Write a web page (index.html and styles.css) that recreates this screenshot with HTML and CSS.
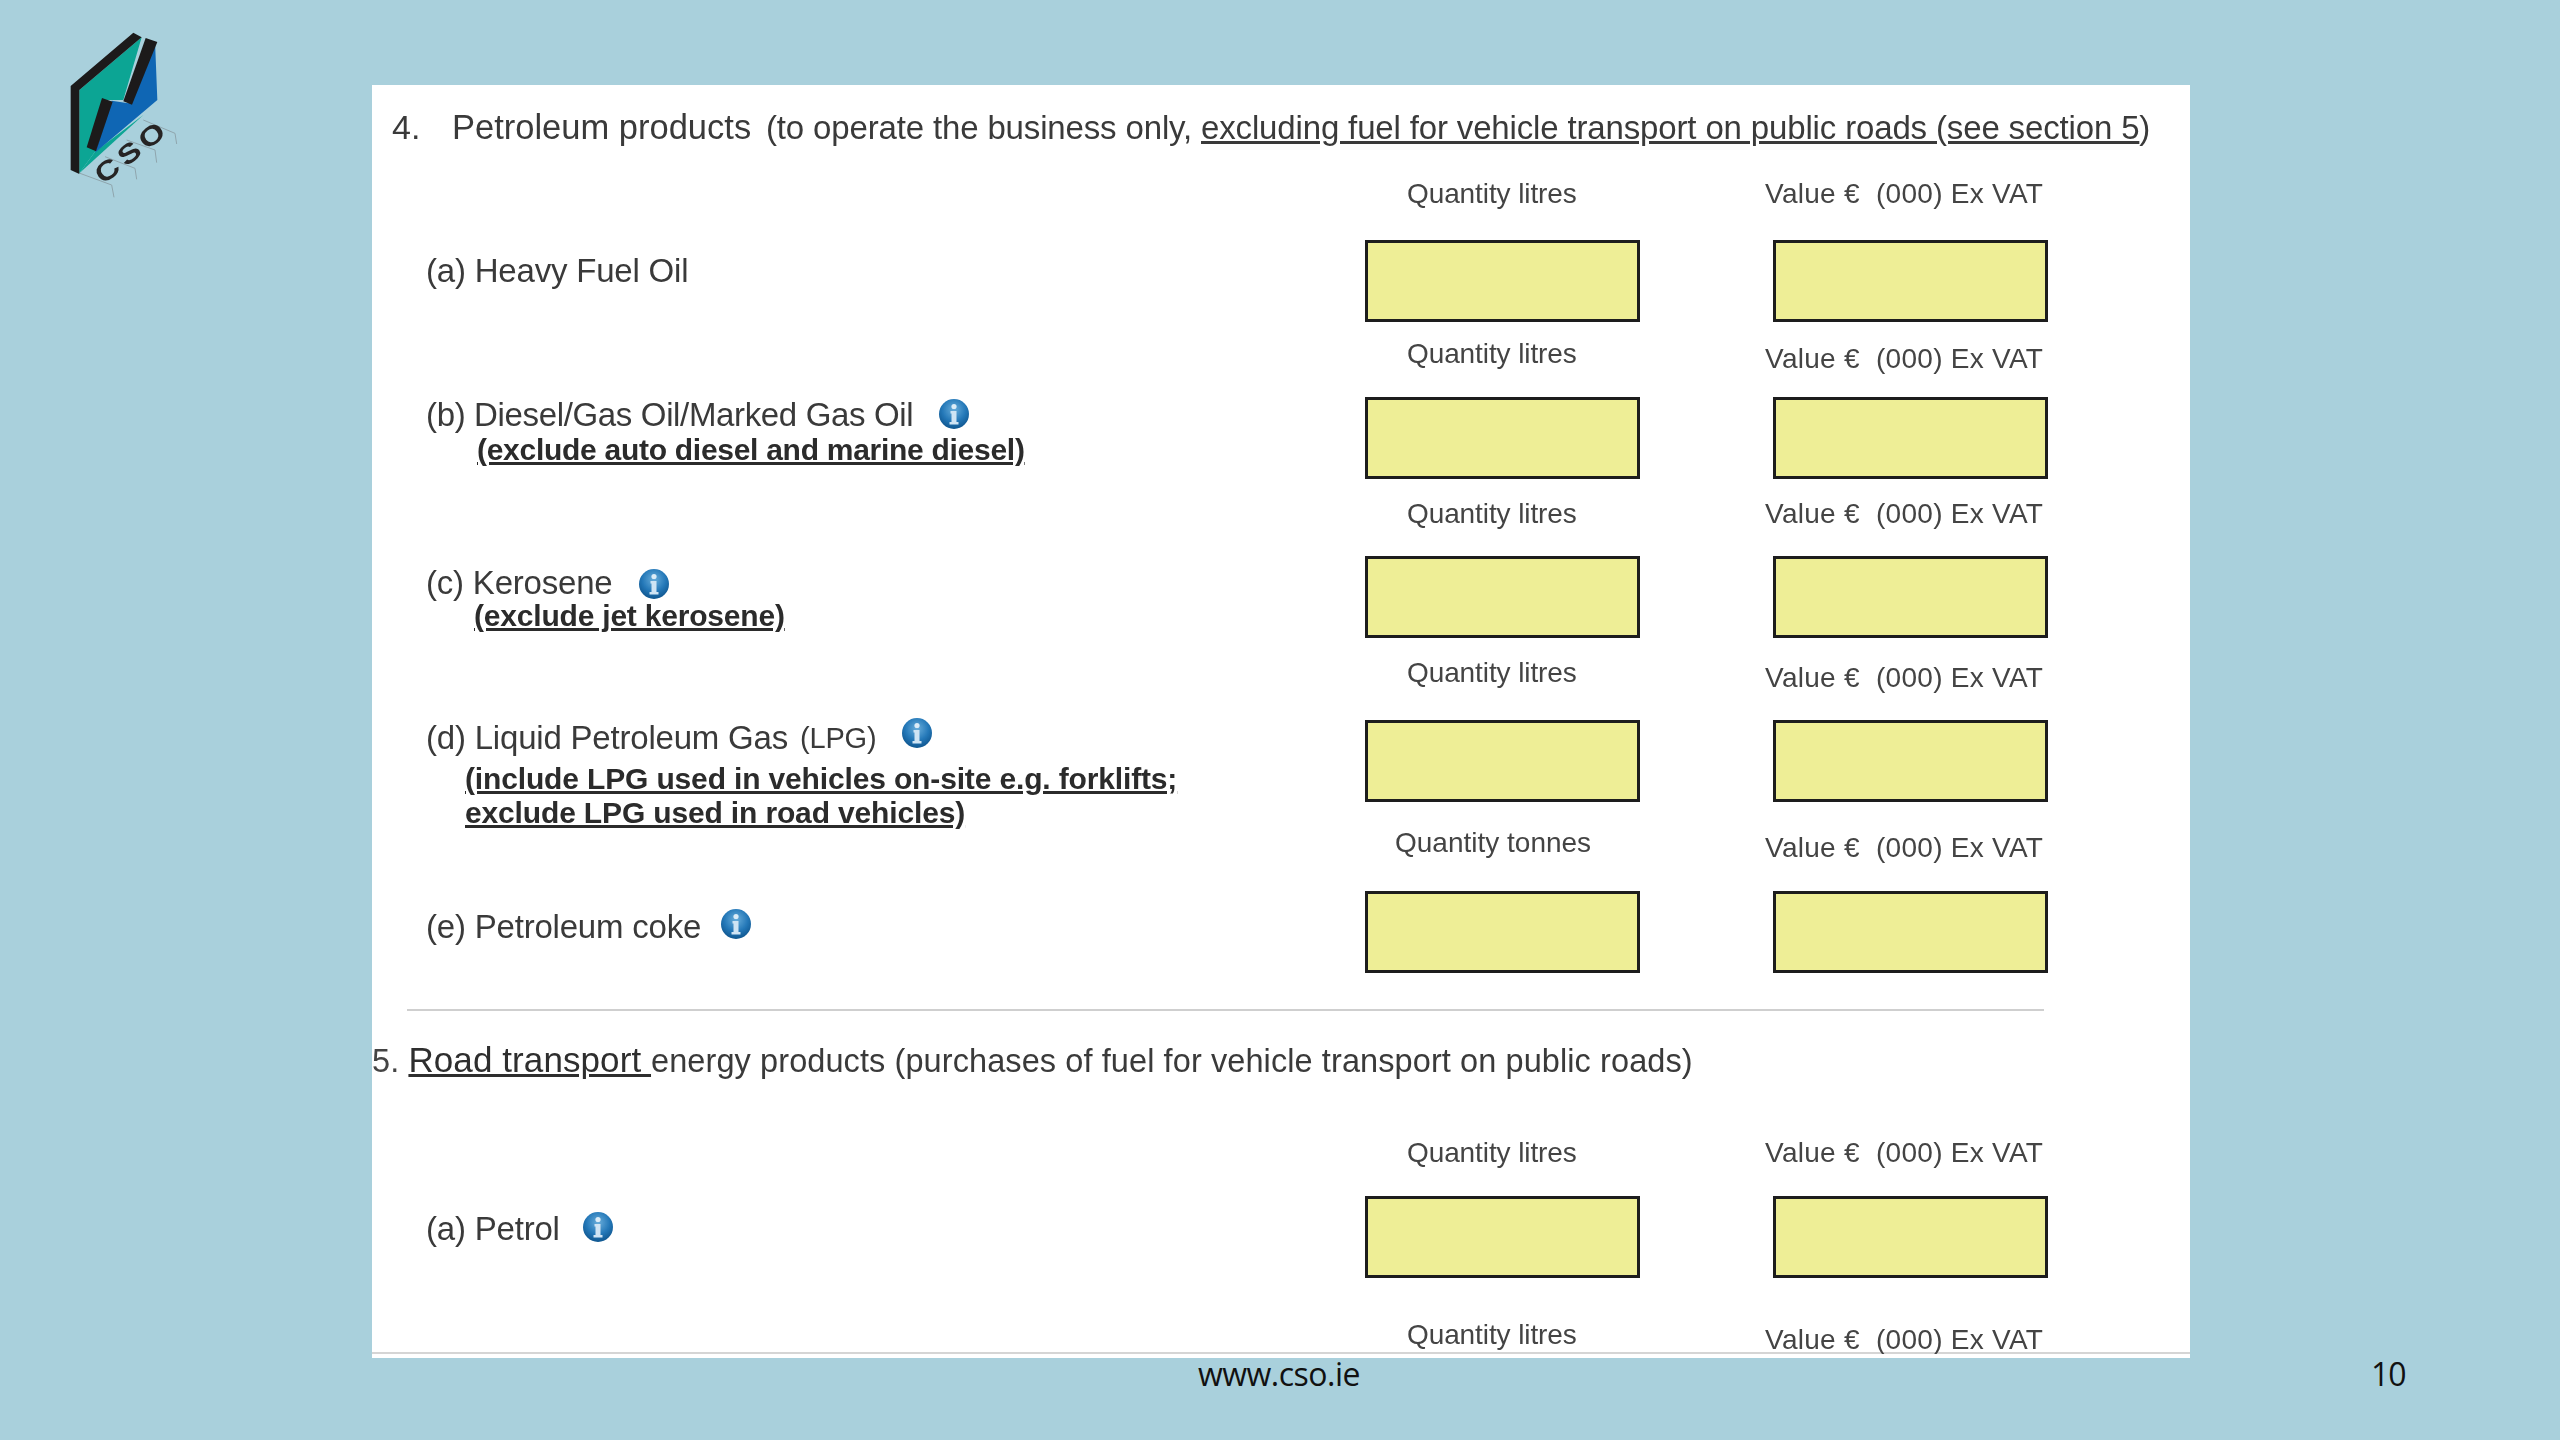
FILE: index.html
```html
<!DOCTYPE html>
<html lang="en">
<head>
<meta charset="utf-8">
<title>Petroleum products</title>
<link rel="stylesheet" href="styles.css">
</head>
<body>
<svg width="0" height="0" class="defs" aria-hidden="true">
  <defs>
    <radialGradient id="ig" cx="50%" cy="35%" r="65%">
      <stop offset="0" stop-color="#6aaedb"/>
      <stop offset="0.6" stop-color="#2478b8"/>
      <stop offset="1" stop-color="#0f568f"/>
    </radialGradient>
    <symbol id="info" viewBox="0 0 32 32">
      <circle cx="16" cy="16" r="15" fill="url(#ig)"/>
      <circle cx="16" cy="8.500" r="2.600" fill="#dcecf7"/>
      <path d="M12.500 13h6v11h2v2.500h-9V24h2v-8.500h-1z" fill="#cfe4f4"/>
    </symbol>
  </defs>
</svg>
<main class="slide">
  <div class="top">
    <svg class="logo" viewBox="0 0 540 600" aria-label="CSO logo">
      <g fill="none" stroke="#8fa5ad" stroke-width="3">
        <path d="M120 490L215 525L222 562"/>
        <path d="M195 440L285 475L290 508"/>
        <path d="M260 390L345 420L350 458"/>
        <path d="M310 330L405 370L410 402"/>
      </g>
      <path d="M118 240L305 82L250 270L200 270L165 425L118 490Z" fill="#0ca594"/>
      <path d="M118 490L310 315L165 425Z" fill="#0ca594"/>
      <path d="M345 92L352 270L165 428L215 272L265 280Z" fill="#0f66b4"/>
      <path d="M92 228L280 68L305 82L118 240V492L92 480Z" fill="#1c1a1a"/>
      <path d="M317 84L352 96L276 284L250 274Z" fill="#1c1a1a"/>
      <path d="M186 264L218 275L168 424L140 412Z" fill="#1c1a1a"/>
      <text class="logo-text" transform="translate(190 525) rotate(-38) scale(1.25 1)">CSO</text>
    </svg>
    <section class="sheet">
      <p class="head"><span class="num">4.</span><span class="title">Petroleum products</span><span class="note">(to operate the business only, <u>excluding fuel for vehicle transport on public roads (see section 5</u>)</span></p>

      <div class="row r-a">
        <div class="label"><div class="line">(a) Heavy Fuel Oil</div></div>
        <div class="field q"><div class="cap">Quantity litres</div><div class="box"></div></div>
        <div class="field v"><div class="cap">Value €&nbsp; (000) Ex VAT</div><div class="box"></div></div>
      </div>

      <div class="row r-b">
        <div class="label">
          <div class="line">(b) Diesel/Gas Oil/Marked Gas Oil<svg class="info"><use href="#info"/></svg></div>
          <div class="sub">(exclude auto diesel and marine diesel)</div>
        </div>
        <div class="field q"><div class="cap">Quantity litres</div><div class="box"></div></div>
        <div class="field v"><div class="cap">Value €&nbsp; (000) Ex VAT</div><div class="box"></div></div>
      </div>

      <div class="row r-c">
        <div class="label">
          <div class="line">(c) Kerosene<svg class="info"><use href="#info"/></svg></div>
          <div class="sub">(exclude jet kerosene)</div>
        </div>
        <div class="field q"><div class="cap">Quantity litres</div><div class="box"></div></div>
        <div class="field v"><div class="cap">Value €&nbsp; (000) Ex VAT</div><div class="box"></div></div>
      </div>

      <div class="row r-d">
        <div class="label">
          <div class="line">(d) Liquid Petroleum Gas <small class="lpg">(LPG)</small><svg class="info"><use href="#info"/></svg></div>
          <div class="sub">(include LPG used in vehicles on-site e.g. forklifts;<br>exclude LPG used in road vehicles)</div>
        </div>
        <div class="field q"><div class="cap">Quantity litres</div><div class="box"></div></div>
        <div class="field v"><div class="cap">Value €&nbsp; (000) Ex VAT</div><div class="box"></div></div>
      </div>

      <div class="row r-e">
        <div class="label"><div class="line">(e) Petroleum coke<svg class="info"><use href="#info"/></svg></div></div>
        <div class="field q"><div class="cap">Quantity tonnes</div><div class="box"></div></div>
        <div class="field v"><div class="cap">Value €&nbsp; (000) Ex VAT</div><div class="box"></div></div>
      </div>

      <hr class="rule">
      <p class="head5"><span class="num5">5.</span> <u class="road">Road transport </u>energy products (purchases of fuel for vehicle transport on public roads)</p>

      <div class="row r-f">
        <div class="label"><div class="line">(a) Petrol<svg class="info"><use href="#info"/></svg></div></div>
        <div class="field q"><div class="cap">Quantity litres</div><div class="box"></div></div>
        <div class="field v"><div class="cap">Value €&nbsp; (000) Ex VAT</div><div class="box"></div></div>
      </div>

      <div class="row r-g">
        <div class="label"></div>
        <div class="field q"><div class="cap">Quantity litres</div></div>
        <div class="field v"><div class="cap">Value €&nbsp; (000) Ex VAT</div></div>
      </div>
    </section>
  </div>
  <footer class="foot">
    <span class="url">www.cso.ie</span>
    <span class="page">10</span>
  </footer>
</main>
</body>
</html>
```
FILE: styles.css
```css
* { box-sizing: border-box; }
html, body { margin: 0; padding: 0; }
body {
  width: 2560px;
  height: 1440px;
  overflow: hidden;
  background: #a9d0dc;
  font-family: "Liberation Sans", Arial, sans-serif;
  color: #3a3a3a;
}
.defs { display: block; height: 0; }
.slide { width: 2560px; height: 1440px; padding-top: 10px; display: flex; flex-direction: column; }
.top { display: flex; align-items: flex-start; }
.logo { width: 180px; height: 200px; margin-left: 40px; flex: none; filter: blur(.6px); }
.logo-text { font: 700 80px "Liberation Sans", sans-serif; letter-spacing: 11px; fill: #262424; }
.sheet {
  flex: none;
  width: 1818px;
  height: 1273px;
  margin: 75px 0 0 152px;
  background: #fff;
  overflow: hidden;
  border-bottom: 4px solid #fff;
  box-shadow: inset 0 -2px 0 #d5d5d5;
  filter: blur(.6px);
}

/* section 4 heading */
.head { display: flex; align-items: center; height: 85px; margin: 0; padding: 0 0 0 20px; white-space: nowrap; }
.num { width: 60px; font-size: 34px; }
.title { width: 314px; font-size: 34.500px; }
.note { font-size: 33px; letter-spacing: -.15px; }

/* rows */
.row { display: grid; grid-template-columns: 993px 408px 275px; grid-template-rows: 100%; }
.label { padding-left: 54px; font-size: 33px; letter-spacing: -.2px; }
.line { display: flex; align-items: center; height: 36px; white-space: pre; }
.lpg { font-size: 29px; margin-left: 3px; }
.info { width: 32px; height: 32px; flex: none; }
.sub { font-size: 30px; font-weight: 700; line-height: 34px; text-decoration: underline; color: #2b2b2b; white-space: nowrap; }
.field { display: flex; flex-direction: column; height: 100%; }
.cap { font-size: 28px; line-height: 30px; color: #444; letter-spacing: -.1px; white-space: nowrap; }
.q .cap { padding-left: 42px; }
.v .cap { margin-left: -8px; letter-spacing: .28px; }
.box { width: 275px; height: 82px; margin-top: auto; background: #eeee96; border: 3px solid #1d1d1d; }

.r-a { height: 152px; }
.r-a .cap { margin-top: 9px; }
.r-a .label { padding-top: 83px; }

.r-b { height: 157px; }
.r-b .q .cap { margin-top: 17px; }
.r-b .v .cap { margin-top: 22px; }
.r-b .label { padding-top: 75px; }
.r-b .line { letter-spacing: -.35px; }
.r-b .info { margin-left: 25px; margin-top: -2px; }
.r-b .sub { padding-left: 51px; letter-spacing: -.28px; }

.r-c { height: 159px; }
.r-c .cap { margin-top: 20px; }
.r-c .label { padding-top: 86px; }
.r-c .info { margin-left: 25px; margin-top: 2px; }
.r-c .sub { padding-left: 48px; margin-top: -2px; }

.r-d { height: 164px; }
.r-d .q .cap { margin-top: 20px; }
.r-d .v .cap { margin-top: 25px; }
.r-d .label { padding-top: 82px; }
.r-d .info { margin-left: 25px; margin-top: -10px; }
.r-d .sub { padding-left: 39px; margin-top: 6px; letter-spacing: -.15px; }

.r-e { height: 171px; }
.r-e .q .cap { margin-top: 26px; padding-left: 30px; letter-spacing: 0; }
.r-e .v .cap { margin-top: 31px; }
.r-e .label { padding-top: 107px; }
.r-e .info { margin-left: 19px; margin-top: -6px; }

.rule { height: 2px; width: 1637px; margin: 36px 0 0 35px; border: 0; background: #cfcfcf; }
.head5 { margin: 29px 0 0; font-size: 32.500px; line-height: 40px; letter-spacing: .09px; white-space: nowrap; }
.road { font-size: 35px; color: #2e2e2e; }
.num5 { color: #444; }

.r-f { height: 162px; margin-top: 35px; }
.r-f .cap { margin-top: 22px; }
.r-f .label { padding-top: 95px; }
.r-f .info { margin-left: 22px; margin-top: -4px; }

.r-g { height: 81px; }
.r-g .q .cap { margin-top: 42px; }
.r-g .v .cap { margin-top: 47px; }

.foot { display: grid; grid-template-columns: 2371px auto; height: 32px; color: #111; font: 32px/32px "Open Sans", sans-serif; }
.url { justify-self: center; padding-left: 187px; letter-spacing: -.5px; }
.page { letter-spacing: -1px; }
```
